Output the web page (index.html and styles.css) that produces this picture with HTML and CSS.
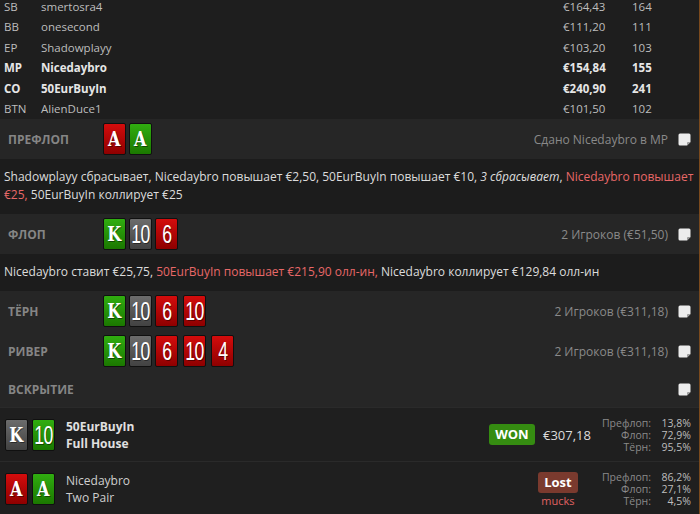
FILE: index.html
```html
<!DOCTYPE html>
<html>
<head>
    <title>Hand history</title>
    <link rel="stylesheet" href="styles.css">
</head>
<body>
<div class="hand">
    <div class="players">
        <div class="player"><span>SB</span><span>smertosra4</span><span>€164,43</span><span>164</span></div>
        <div class="player"><span>BB</span><span>onesecond</span><span>€111,20</span><span>111</span></div>
        <div class="player"><span>EP</span><span>Shadowplayy</span><span>€103,20</span><span>103</span></div>
        <div class="player hero"><span>MP</span><span>Nicedaybro</span><span>€154,84</span><span>155</span></div>
        <div class="player hero"><span>CO</span><span>50EurBuyIn</span><span>€240,90</span><span>241</span></div>
        <div class="player"><span>BTN</span><span>AlienDuce1</span><span>€101,50</span><span>102</span></div>
    </div>

    <div class="street">
        <span class="street-label">Префлоп</span>
        <div class="cards">
            <span class="card red"><span>A</span></span>
            <span class="card green"><span>A</span></span>
        </div>
        <span class="street-info">Сдано Nicedaybro в MP</span>
        <svg class="note" width="13" height="13" viewBox="0 0 13 13"><path d="M2 .5h9a1.5 1.5 0 0 1 1.5 1.5v7l-3.5 3.5h-7A1.5 1.5 0 0 1 .5 11V2A1.5 1.5 0 0 1 2 .5z" fill="#ececec"/><path d="M12.5 9l-3.5 3.5v-2.5a1 1 0 0 1 1-1z" fill="#9a9a9a"/></svg>
    </div>
    <div class="actions">
        Shadowplayy сбрасывает, Nicedaybro повышает €2,50, 50EurBuyIn повышает €10, <i>3 сбрасывает</i>, <span class="hl">Nicedaybro повышает</span> <span class="hl">€25,</span> 50EurBuyIn коллирует €25
    </div>

    <div class="street">
        <span class="street-label">Флоп</span>
        <div class="cards">
            <span class="card green"><span>K</span></span>
            <span class="card grey num"><span>10</span></span>
            <span class="card red num"><span>6</span></span>
        </div>
        <span class="street-info">2 Игроков (€51,50)</span>
        <svg class="note" width="13" height="13" viewBox="0 0 13 13"><path d="M2 .5h9a1.5 1.5 0 0 1 1.5 1.5v7l-3.5 3.5h-7A1.5 1.5 0 0 1 .5 11V2A1.5 1.5 0 0 1 2 .5z" fill="#ececec"/><path d="M12.5 9l-3.5 3.5v-2.5a1 1 0 0 1 1-1z" fill="#9a9a9a"/></svg>
    </div>
    <div class="actions">
        Nicedaybro ставит €25,75, <span class="hl">50EurBuyIn повышает €215,90 олл-ин,</span> Nicedaybro коллирует €129,84 олл-ин
    </div>

    <div class="street">
        <span class="street-label">Тёрн</span>
        <div class="cards">
            <span class="card green"><span>K</span></span>
            <span class="card grey num"><span>10</span></span>
            <span class="card red num"><span>6</span></span>
            <span class="card red num extra"><span>10</span></span>
        </div>
        <span class="street-info">2 Игроков (€311,18)</span>
        <svg class="note" width="13" height="13" viewBox="0 0 13 13"><path d="M2 .5h9a1.5 1.5 0 0 1 1.5 1.5v7l-3.5 3.5h-7A1.5 1.5 0 0 1 .5 11V2A1.5 1.5 0 0 1 2 .5z" fill="#ececec"/><path d="M12.5 9l-3.5 3.5v-2.5a1 1 0 0 1 1-1z" fill="#9a9a9a"/></svg>
    </div>

    <div class="street">
        <span class="street-label">Ривер</span>
        <div class="cards">
            <span class="card green"><span>K</span></span>
            <span class="card grey num"><span>10</span></span>
            <span class="card red num"><span>6</span></span>
            <span class="card red num extra"><span>10</span></span>
            <span class="card red num extra"><span>4</span></span>
        </div>
        <span class="street-info">2 Игроков (€311,18)</span>
        <svg class="note" width="13" height="13" viewBox="0 0 13 13"><path d="M2 .5h9a1.5 1.5 0 0 1 1.5 1.5v7l-3.5 3.5h-7A1.5 1.5 0 0 1 .5 11V2A1.5 1.5 0 0 1 2 .5z" fill="#ececec"/><path d="M12.5 9l-3.5 3.5v-2.5a1 1 0 0 1 1-1z" fill="#9a9a9a"/></svg>
    </div>

    <div class="street showdown-head">
        <span class="street-label">Вскрытие</span>
        <span class="street-info"></span>
        <svg class="note" width="13" height="13" viewBox="0 0 13 13"><path d="M2 .5h9a1.5 1.5 0 0 1 1.5 1.5v7l-3.5 3.5h-7A1.5 1.5 0 0 1 .5 11V2A1.5 1.5 0 0 1 2 .5z" fill="#ececec"/><path d="M12.5 9l-3.5 3.5v-2.5a1 1 0 0 1 1-1z" fill="#9a9a9a"/></svg>
    </div>

    <div class="result">
        <div class="cards">
            <span class="card grey"><span>K</span></span>
            <span class="card green num"><span>10</span></span>
        </div>
        <div class="who winner">
            <div>50EurBuyIn</div>
            <div>Full House</div>
        </div>
        <div class="outcome">
            <span class="badge won">WON</span>
            <span class="amount">€307,18</span>
        </div>
        <div class="equity">
            <span>Префлоп:</span><span>13,8%</span>
            <span>Флоп:</span><span>72,9%</span>
            <span>Тёрн:</span><span>95,5%</span>
        </div>
    </div>

    <div class="result">
        <div class="cards">
            <span class="card red"><span>A</span></span>
            <span class="card green"><span>A</span></span>
        </div>
        <div class="who">
            <div>Nicedaybro</div>
            <div>Two Pair</div>
        </div>
        <div class="outcome lost-box">
            <span class="badge lost">Lost</span>
            <span class="mucks">mucks</span>
        </div>
        <div class="equity">
            <span>Префлоп:</span><span>86,2%</span>
            <span>Флоп:</span><span>27,1%</span>
            <span>Тёрн:</span><span>4,5%</span>
        </div>
    </div>
</div>
</body>
</html>
```

FILE: styles.css
```css
/* hand history panel */
body {
    margin: 0;
    padding: 0;
    background-color: #1e1e1e;
    font-family: "Open Sans", "Noto Sans", sans-serif;
    font-size: 11.5px;
    color: #c8c8c8;
    overflow: hidden;
}

.hand {
    width: 699px;
    height: 514px;
    border-right: 1px solid #7a4a1e;
    overflow: hidden;
}

.players {
    margin-top: -3px;
}

.player {
    display: grid;
    grid-template-columns: 37px 522px 69px auto;
    padding-left: 4px;
    height: 20.4px;
    line-height: 20.4px;
    color: #bdbdbd;
}

.player.hero {
    font-weight: bold;
    color: #e6e6e6;
}

.street {
    display: flex;
    align-items: center;
    height: 40px;
    padding: 0 8px;
    background-color: #262626;
}

.street-label {
    width: 95px;
    font-weight: bold;
    font-size: 12px;
    text-transform: uppercase;
    color: #858585;
}

.street-info {
    margin-left: auto;
    color: #8a8a8a;
    font-size: 12px;
}

.note {
    margin-left: 10px;
    display: block;
}

.showdown-head {
    height: 36px;
}

.cards {
    display: flex;
    gap: 3px;
}

.card {
    display: flex;
    align-items: center;
    justify-content: center;
    width: 21px;
    height: 30px;
    border: 1px solid #101010;
    border-radius: 2px;
    color: #fff;
    font-family: "DejaVu Serif Condensed", "DejaVu Serif", serif;
    font-weight: bold;
    font-size: 21px;
    line-height: 30px;
    text-shadow: 1px 1px 0 rgba(0, 0, 0, 0.45);
    overflow: hidden;
}

.card span {
    display: inline-block;
    transform: scaleX(0.85);
}

.card.num {
    font-family: "Liberation Sans", sans-serif;
    font-weight: normal;
    font-size: 26px;
    letter-spacing: -1px;
}

.card.num span {
    transform: scaleX(0.68);
}

.card.extra {
    margin-left: 2px;
}

.card.red {
    background: linear-gradient(#d40c0c, #8e0000);
}

.card.green {
    background: linear-gradient(#30ad10, #1b7800);
}

.card.grey {
    background: linear-gradient(#6c6c6c, #424242);
}

.actions {
    padding: 9px 4px 10px;
    line-height: 18px;
    font-size: 12px;
    color: #dcdcdc;
    background-color: #1c1c1c;
}

.actions .hl {
    color: #e86868;
}

.result {
    display: flex;
    align-items: center;
    height: 53px;
    padding: 0 8px 0 5px;
    border-top: 1px solid #2a2a2a;
    background-color: #1f1f1f;
}

.result .cards {
    gap: 4px;
}

.who {
    margin-left: 11px;
    line-height: 17px;
    font-size: 12px;
    color: #cfcfcf;
}

.who.winner {
    font-weight: bold;
    color: #e0e0e0;
}

.outcome {
    margin-left: auto;
    display: flex;
    align-items: center;
    gap: 8px;
    margin-right: 11px;
}

.badge {
    display: block;
    height: 21px;
    line-height: 21px;
    border-radius: 3px;
    color: #fff;
    font-weight: bold;
    font-size: 13px;
    text-align: center;
}

.badge.won {
    width: 46px;
    background-color: #358c11;
}

.badge.lost {
    width: 40px;
    background-color: #7a3a2e;
}

.amount {
    font-size: 13px;
    color: #dcdcdc;
}

.lost-box {
    flex-direction: column;
    gap: 1px;
    margin-right: 24px;
    margin-top: 2px;
}

.mucks {
    font-size: 11px;
    color: #e06262;
    line-height: 14px;
}

.equity {
    display: grid;
    grid-template-columns: auto 34px;
    column-gap: 6px;
    font-size: 10.5px;
    line-height: 12px;
    text-align: right;
}

.equity span:nth-child(odd) {
    color: #8a8a8a;
}

.equity span:nth-child(even) {
    color: #bdbdbd;
}
```
